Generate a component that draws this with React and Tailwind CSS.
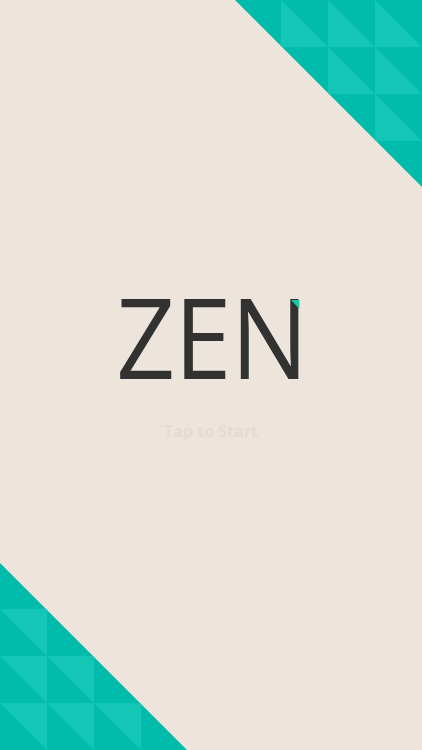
import React from 'react';

const CELL = 47;
const SIZE = 187;

// triangle pattern for the corners
const CornerPattern = ({ corner }) => {
  const cells = [];
  for (let r = 0; r < 4; r++) {
    for (let c = 0; c < 4; c++) {
      let x, y;
      if (corner === 'top-right') {
        x = SIZE - CELL * (c + 1);
        y = CELL * r;
      } else {
        x = CELL * c;
        y = SIZE - CELL * (r + 1);
      }
      const light =
        corner === 'top-right'
          ? `${x},${y} ${x},${y + CELL} ${x + CELL},${y + CELL}`
          : `${x},${y} ${x + CELL},${y} ${x + CELL},${y + CELL}`;
      cells.push(
        <g key={`${r}-${c}`}>
          <rect x={x} y={y} width={CELL} height={CELL} fill="#02bcab" />
          <polygon points={light} fill="#13c6b6" />
        </g>
      );
    }
  }
  const clip = corner === 'top-right' ? `0,0 ${SIZE},0 ${SIZE},${SIZE}` : `0,0 0,${SIZE} ${SIZE},${SIZE}`;
  const id = `clip-${corner}`;
  return (
    <svg width={SIZE} height={SIZE} viewBox={`0 0 ${SIZE} ${SIZE}`} className="block">
      <defs>
        <clipPath id={id}>
          <polygon points={clip} />
        </clipPath>
      </defs>
      <g clipPath={`url(#${id})`}>{cells}</g>
    </svg>
  );
};

export default function App() {
  return (
    <div className="relative w-full h-[750px] overflow-hidden bg-[#ede5db]" style={{ fontFamily: '"Open Sans", sans-serif' }}>
      <div className="absolute top-0 right-0">
        <CornerPattern corner="top-right" />
      </div>
      <div className="absolute bottom-0 left-0">
        <CornerPattern corner="bottom-left" />
      </div>

      <div className="flex flex-col items-center pt-[280px]">
        <h1 className="flex text-[112px] leading-none font-normal text-[#333232] tracking-[-1px] scale-x-[0.92] translate-x-[1px]">
          <span>ZE</span>
          <span className="relative block">
            N
            <span className="absolute top-[20px] right-[9px] w-0 h-0 border-t-[9px] border-t-[#14c8a8] border-l-[9px] border-l-transparent" />
          </span>
        </h1>
        <p className="mt-[31px] text-[16px] leading-none font-bold text-[#e4dbd1]">Tap to Start</p>
      </div>
    </div>
  );
}
